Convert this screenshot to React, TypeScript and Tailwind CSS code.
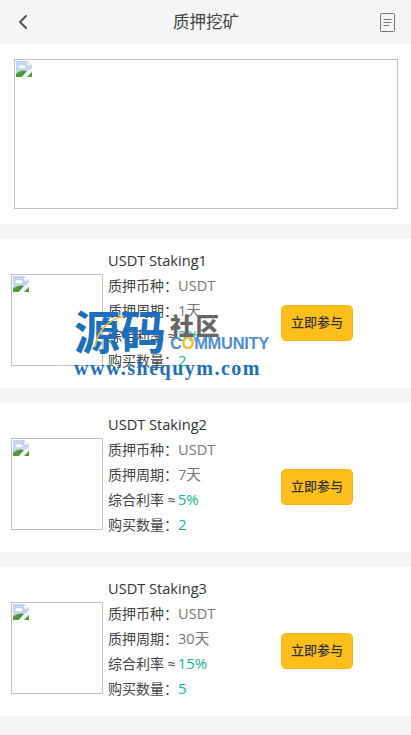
const font = { fontFamily: '"Open Sans", "Noto Sans CJK SC", sans-serif' };

function BrokenIcon() {
  return (
    <svg width="16" height="16" viewBox="0 0 16 16" className="absolute left-px top-px">
      <path d="M0 0H11L16 5V11L10 16H0Z" fill="#c3d5f3" />
      <path d="M11 0L16 5H11Z" fill="#ffffff" stroke="#c4c4c4" strokeWidth="0.6" />
      <ellipse cx="6" cy="5.8" rx="3.6" ry="1.7" fill="#ffffff" />
      <path d="M0 16V13C3 10 7 8.5 11 10L6 16Z" fill="#4f9a32" />
      <path d="M11 16L16 11V16Z" fill="#4f9a32" />
      <path d="M6 16L11 10.5L16 7V10L10 16Z" fill="#ffffff" />
    </svg>
  );
}

function Broken({ className }: { className: string }) {
  return (
    <div className={`relative shrink-0 border border-[#c0c0c0] ${className}`}>
      <BrokenIcon />
    </div>
  );
}

function Card({ n, days, rate, qty }: { n: number; days: string; rate: string; qty: string }) {
  return (
    <section className="flex h-[149px] items-center bg-white pl-[11px]">
      <Broken className="mt-[13px] h-[92px] w-[92px]" />
      <div className="ml-[5px] flex w-[173px] flex-col pb-[6px] text-[14px] leading-[25px] text-[#444]">
        <div className="text-[14.6px] text-[#333]">USDT Staking{n}</div>
        <div>
          质押币种：<span className="text-[14.6px] text-[#777]">USDT</span>
        </div>
        <div>
          质押周期：<span className="text-[14.6px] text-[#777]">{days}</span>
        </div>
        <div>
          综合利率 ≈<span className="ml-[2px] text-[15px] text-[#13b78f]">{rate}</span>
        </div>
        <div>
          购买数量：<span className="text-[15px] text-[#13b78f]">{qty}</span>
        </div>
      </div>
      <button className="mt-[19px] flex h-[36px] w-[72px] items-center justify-center rounded-[5px] border border-[#f0b41a] bg-[#ffbf1a] text-[13px] font-medium text-[#333]">
        立即参与
      </button>
    </section>
  );
}

export default function App() {
  return (
    <div className="relative h-[735px] w-[411px] overflow-hidden bg-[#f5f5f5]" style={font}>
      <header className="flex h-[44px] items-center pl-[17px] pr-[16px]">
        <svg width="11" height="16" viewBox="0 0 11 16" fill="none" stroke="#555" strokeWidth="2" strokeLinecap="round" strokeLinejoin="round">
          <path d="M9 2L3 8L9 14" />
        </svg>
        <h1 className="ml-[4px] flex-1 text-center text-[16.5px] font-normal text-[#444]">质押挖矿</h1>
        <svg width="15" height="19" viewBox="0 0 15 19" fill="none" stroke="#777" strokeWidth="1">
          <rect x="0.5" y="0.5" width="14" height="18" rx="1" />
          <path d="M3.5 6.5H11.5M3.5 9.5H11.5M3.5 12.5H9" />
        </svg>
      </header>

      <div className="h-[180px] bg-white px-[14px] pt-[15px]">
        <Broken className="h-[150px] w-[384px]" />
      </div>

      <div className="mt-[15px] flex flex-col gap-[15px]">
        <Card n={1} days="1天" rate="3%" qty="2" />
        <Card n={2} days="7天" rate="5%" qty="2" />
        <Card n={3} days="30天" rate="15%" qty="5" />
      </div>

      <div className="absolute left-[74px] top-[306px] h-[72px] w-[200px] text-[#1c6fbd]">
        <div
          className="absolute left-0 -top-[3px] text-[46px] font-bold leading-[52px]"
          style={{ fontFamily: '"Noto Sans CJK SC", sans-serif' }}
        >
          源码
        </div>
        <svg width="40" height="36" viewBox="0 0 40 36" fill="none" className="absolute left-[20px] top-[8px]">
          <path d="M1 33C3 18 13 6 30 2" stroke="#f5b93a" strokeWidth="1.6" />
        </svg>
        <div
          className="absolute left-[96px] top-[4px] text-[24px] font-black leading-[30px] tracking-[1.5px] text-[#666]"
          style={{ fontFamily: '"Noto Sans CJK SC", sans-serif' }}
        >
          社区
        </div>
        <div className="absolute left-[96px] top-[27px] whitespace-nowrap text-[16.5px] font-bold leading-[20px] tracking-[-0.3px] text-[#4f8fcf]" style={{ fontFamily: '"Liberation Sans", sans-serif' }}>
          C<span className="text-[#f5b93a]">O</span>MMUNITY
        </div>
        <div
          className="absolute left-0 top-[52px] whitespace-nowrap text-[20px] font-bold leading-[20px] tracking-[1.5px]"
          style={{ fontFamily: '"Liberation Serif", serif' }}
        >
          www.shequym.com
        </div>
      </div>
    </div>
  );
}
